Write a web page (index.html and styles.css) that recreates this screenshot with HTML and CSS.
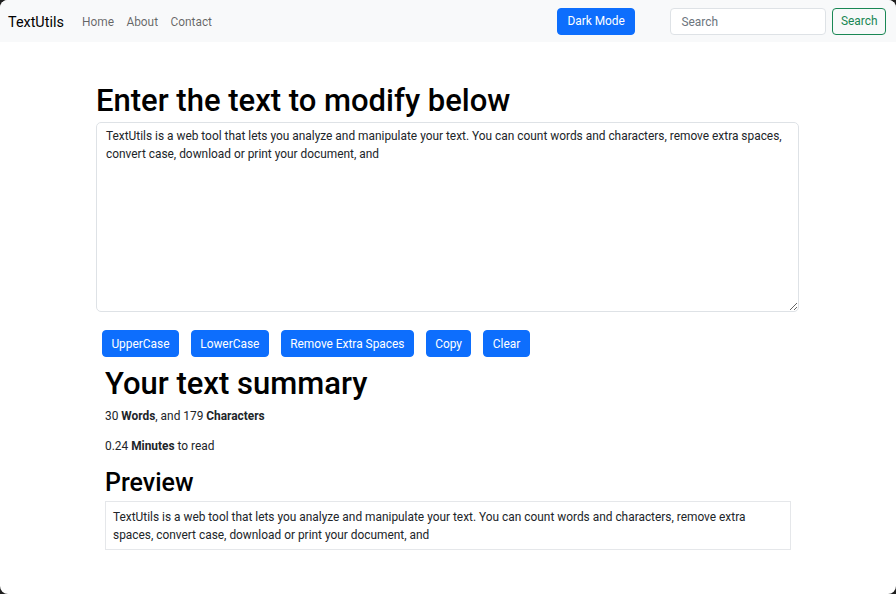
FILE: index.html
```html
<!DOCTYPE html>
<html lang="en">
<head>
<meta charset="utf-8">
<title>TextUtils</title>
<link rel="stylesheet" href="styles.css">
</head>
<body>
<nav class="navbar">
  <a class="brand" href="#">TextUtils</a>
  <ul class="nav-links">
    <li><a href="#">Home</a></li>
    <li><a href="#">About</a></li>
    <li><a href="#">Contact</a></li>
  </ul>
  <button class="btn btn-primary dark-btn">Dark Mode</button>
  <form class="search">
    <input class="search-input" type="search" placeholder="Search">
    <button class="btn btn-outline-success" type="button">Search</button>
  </form>
</nav>
<main class="container">
  <h1 class="title">Enter the text to modify below</h1>
  <textarea class="text-box">TextUtils is a web tool that lets you analyze and manipulate your text. You can count words and characters, remove extra spaces, convert case, download or print your document, and</textarea>
  <div class="actions">
    <button class="btn btn-primary">UpperCase</button>
    <button class="btn btn-primary">LowerCase</button>
    <button class="btn btn-primary">Remove Extra Spaces</button>
    <button class="btn btn-primary">Copy</button>
    <button class="btn btn-primary">Clear</button>
  </div>
  <section class="summary">
    <h1 class="title">Your text summary</h1>
    <p>30 <b>Words</b>, and 179 <b>Characters</b></p>
    <p>0.24 <b>Minutes</b> to read</p>
    <h2 class="sub">Preview</h2>
    <div class="preview">TextUtils is a web tool that lets you analyze and manipulate your text. You can count words and characters, remove extra spaces, convert case, download or print your document, and</div>
  </section>
</main>
</body>
</html>
```
FILE: styles.css
```css
html {
  background: #1f1f1f;
  height: 100%;
}
body {
  margin: 0;
  min-height: 594px;
  background: #fff;
  border-radius: 8px;
  overflow: hidden;
  font-family: Roboto, "Noto Sans", sans-serif;
  font-size: 11.9px;
  line-height: 1.5;
  color: #212529;
}
.navbar {
  display: flex;
  align-items: center;
  height: 42px;
  background: #f8f9fa;
  padding: 0 10px 0 8px;
  box-sizing: border-box;
}
.brand {
  font-size: 14.4px;
  color: #000;
  text-decoration: none;
  margin-right: 12px;
  padding-top: 3px;
}
.nav-links {
  display: flex;
  list-style: none;
  margin: 0;
  padding: 3px 0 0;
  flex: 1;
}
.nav-links a {
  display: block;
  padding: 0 6.2px;
  font-size: 11.9px;
  color: rgba(0, 0, 0, 0.6);
  text-decoration: none;
}
.btn {
  font-family: inherit;
  font-size: 11.9px;
  line-height: 1.5;
  height: 27px;
  box-sizing: border-box;
  padding: 2px 8.4px 0;
  border-radius: 4px;
  border: 1px solid transparent;
  white-space: nowrap;
  cursor: pointer;
}
.btn-primary {
  background: #0d6efd;
  border-color: #0d6efd;
  color: #fff;
}
.dark-btn {
  padding: 2px 9.6px 0;
  margin-right: 35px;
}
.search {
  display: flex;
  gap: 6px;
}
.search-input {
  width: 156px;
  height: 27px;
  box-sizing: border-box;
  border: 1px solid #dee2e6;
  border-radius: 4px;
  padding: 2px 10px 0;
  font-family: inherit;
  font-size: 11.9px;
  background: #fff;
}
.search-input::placeholder {
  color: #6c757d;
}
.btn-outline-success {
  background: transparent;
  border-color: #198754;
  color: #198754;
  padding: 2px 7.5px 0;
}
.container {
  width: 703px;
  margin-left: calc(50% - 352px);
  padding: 0 0 40px;
}
.title {
  font-size: 31px;
  font-weight: 500;
  line-height: 1.2;
  margin: 0 0 5px;
  color: #000;
}
main > .title {
  margin-top: 40px;
  margin-bottom: 3px;
}
.text-box {
  display: block;
  width: 100%;
  height: 190px;
  box-sizing: border-box;
  border: 1px solid #dee2e6;
  border-radius: 5px;
  padding: 5px 9px;
  font-family: inherit;
  font-size: 11.9px;
  line-height: 1.5;
  color: #212529;
  resize: vertical;
}
.actions {
  display: flex;
  gap: 12px;
  margin: 18px 0 0 6px;
}
.summary {
  padding: 8px 0 0 9px;
  margin-right: 8px;
}
.summary p {
  margin: 0 0 12px;
}
.summary .title {
  margin-bottom: 6px;
}
.sub {
  font-size: 25px;
  font-weight: 500;
  line-height: 1.2;
  margin: 0 0 3px;
  color: #000;
}
.preview {
  border: 1px solid #e5e7ea;
  padding: 7px 7px 4px;
  line-height: 1.5;
}
```
